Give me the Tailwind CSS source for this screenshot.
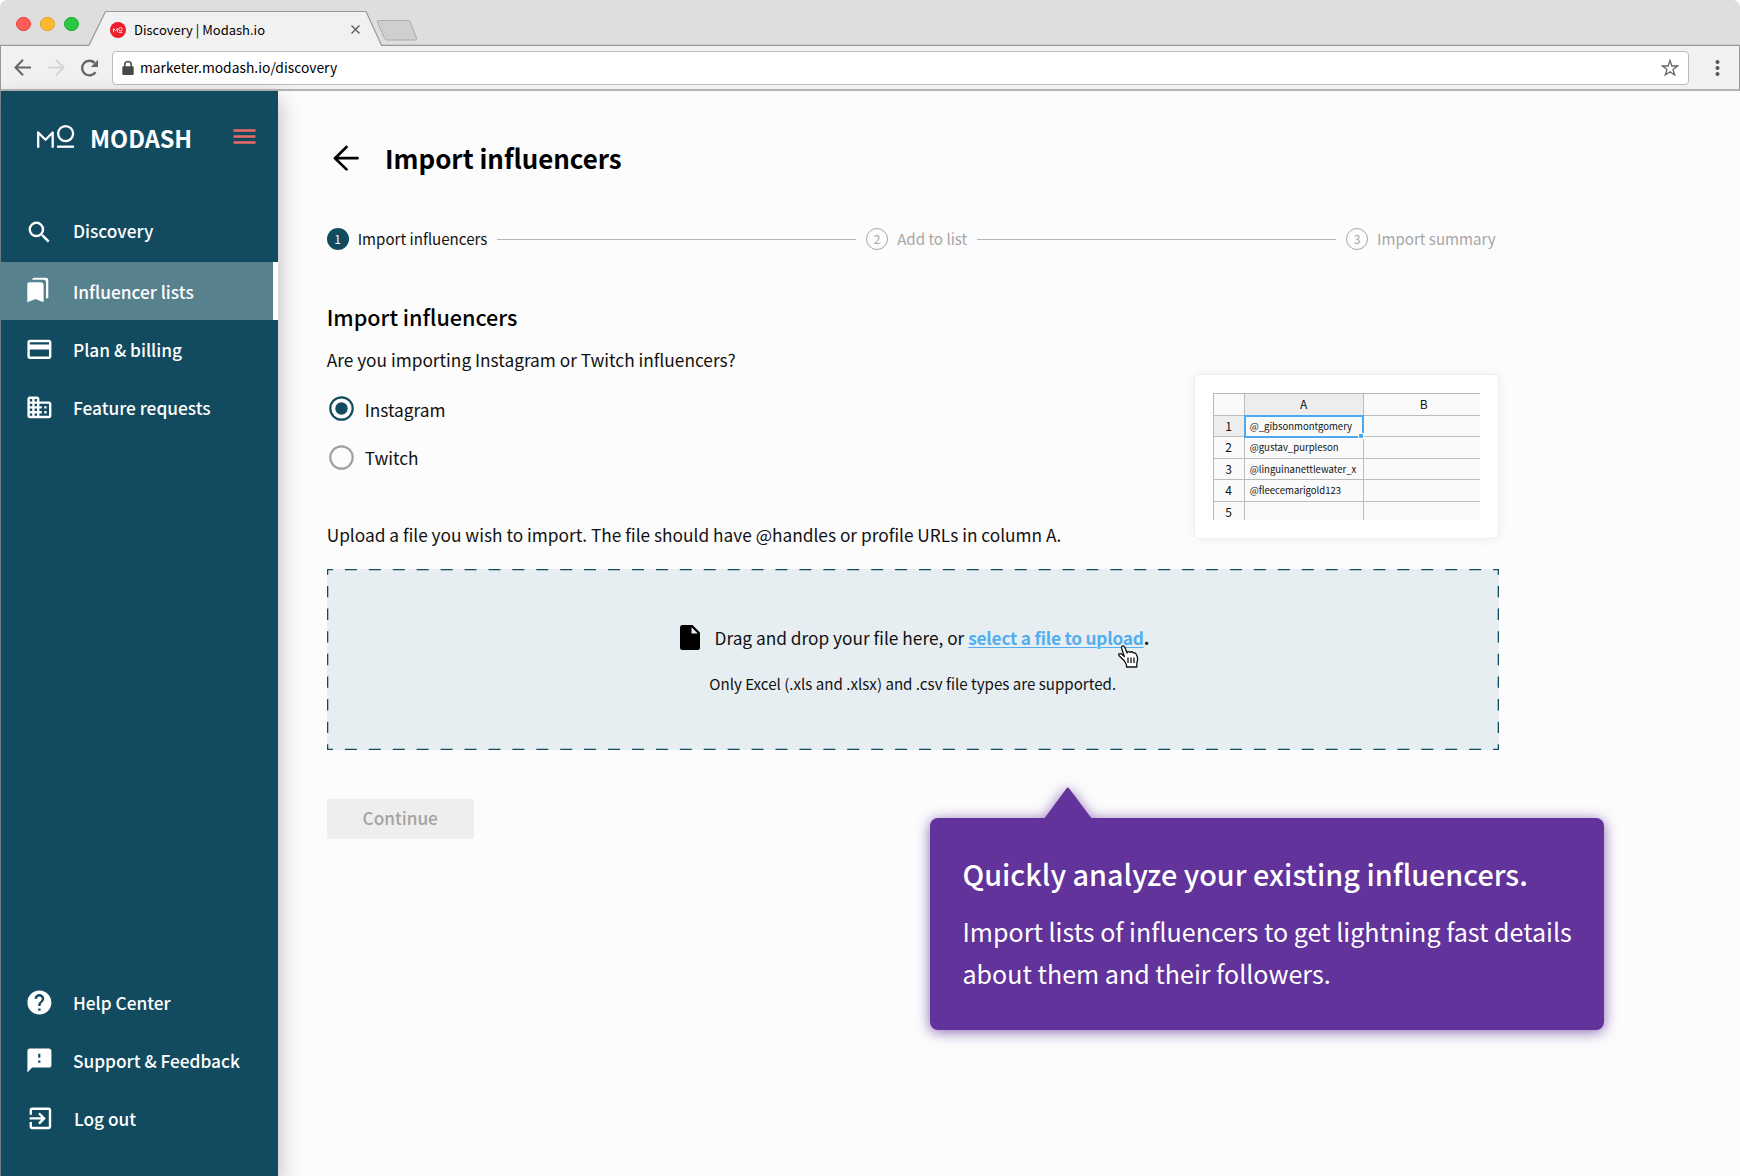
<!DOCTYPE html>
<html lang="en">
<head>
<meta charset="utf-8">
<title>Discovery | Modash.io</title>
<script src="https://cdn.jsdelivr.net/npm/@tailwindcss/browser@4"></script>
</head>
<body class="bg-white font-['Noto_Sans_CJK_SC','Noto_Sans',sans-serif] text-black">
<div class="relative flex h-[1176px] w-[1740px] flex-col overflow-hidden">

  <!-- Tab strip -->
  <div class="relative flex h-[46px] shrink-0 items-center rounded-t-[7px] bg-[#dedede] pl-4">
    <svg class="absolute inset-0" width="1740" height="46" viewBox="0 0 1740 46" fill="none">
      <path d="M0 45.3H89L105.5 11.5H366L381.5 45.3H1740V46H0Z" fill="#f1f1f1"/>
      <path d="M0 45.3H89L105.5 11.5H366L381.5 45.3H1740" stroke="#999" stroke-width="1.2" stroke-linejoin="round"/>
      <path d="M378.500 20.500H408Q409.500 20.500 410.200 22L416.500 38Q417 40 415 40H387Q385.300 40 384.500 38.500L377.500 22Q377 20.500 378.500 20.500Z" fill="#cfcfcf" stroke="#aaa"/>
    </svg>
    <div class="relative flex w-[86px] gap-[9.600px] pt-[2px]">
      <span class="size-[14.500px] rounded-full border border-[#e0443e] bg-[#ff5c57]"></span>
      <span class="size-[14.500px] rounded-full border border-[#dea123] bg-[#ffbb2e]"></span>
      <span class="size-[14.500px] rounded-full border border-[#1aab29] bg-[#28c940]"></span>
    </div>
    <div class="relative flex items-center pt-[13px] pl-[8px]">
      <svg width="16" height="16" viewBox="0 0 16 16" fill="none">
        <circle cx="8" cy="8" r="8" fill="#ed1c2b"/>
        <path d="M3.500 10.300V6.500L5.400 8.400L7.300 6.500V10.300M8.600 10.300H12.300" stroke="#fff" stroke-width=".9"/>
        <circle cx="10.450" cy="7.200" r="1.700" stroke="#fff" stroke-width=".8"/>
      </svg>
      <span class="ml-[8px] text-[13px] leading-5 whitespace-nowrap">Discovery | Modash.io</span>
    </div>
    <svg class="absolute top-[25px] left-[351px]" width="9" height="9" viewBox="0 0 9 9" stroke="#555" stroke-width="1.200"><path d="M.5 .5L8.500 8.500M8.500 .5L.5 8.500"/></svg>
  </div>

  <!-- Toolbar -->
  <div class="flex h-[45px] shrink-0 items-center border-x border-b-2 border-x-[#999] border-b-[#b5b5b5] bg-[#f1f1f1] pl-[13px]">
    <svg width="17" height="17" viewBox="0 0 17 17" fill="none" stroke="#666" stroke-width="2"><path d="M9 .8L1.500 8.500L9 16.200M1.500 8.500H17"/></svg>
    <svg class="ml-[17px]" width="17" height="17" viewBox="0 0 17 17" fill="none" stroke="#d6d6d6" stroke-width="2"><path d="M8 .8L15.500 8.500L8 16.200M15.500 8.500H0"/></svg>
    <svg class="ml-[15px]" width="19" height="18" viewBox="0 0 19 18" fill="none"><path d="M15.500 13.200A7.300 7.300 0 1 1 14.600 3.900" stroke="#666" stroke-width="2.400"/><path d="M18 .8V8H10.800Z" fill="#666"/></svg>
    <div class="ml-[13px] flex h-[34px] w-[1577px] items-center rounded-[4px] border border-[#bdbdbd] bg-white pl-[9px]">
      <svg width="12" height="14" viewBox="0 0 12 14"><path d="M2.800 6V3.800a3.200 3.200 0 0 1 6.400 0V6" fill="none" stroke="#484848" stroke-width="1.500"/><rect x=".3" y="5.300" width="11.400" height="8.700" rx="1.200" fill="#484848"/></svg>
      <span class="ml-[6px] flex-1 pb-px text-[13.850px] leading-6">marketer.modash.io/discovery</span>
      <svg class="mr-[9px]" width="18" height="18" viewBox="0 0 18 18" fill="none" stroke="#666" stroke-width="1.300"><path d="M9 1.500L10.900 7H16.600L12 10.500L13.700 16L9 12.700L4.300 16L6 10.500L1.400 7H7.100Z"/></svg>
    </div>
    <svg class="ml-[26px]" width="5" height="18" viewBox="0 0 5 18" fill="#555"><circle cx="2.500" cy="3" r="2"/><circle cx="2.500" cy="9" r="2"/><circle cx="2.500" cy="15" r="2"/></svg>
  </div>

  <div class="flex min-h-0 flex-1 border-l border-[#7b8b91] bg-[#fcfcfc]">
    <!-- Sidebar -->
    <nav class="relative z-10 flex w-[277px] shrink-0 flex-col bg-[#124b5f] pb-7 text-[17.300px] font-medium text-white shadow-[2px_8px_20px_rgba(0,0,0,0.25)]">
      <div class="flex h-[113px] items-start pt-[32px] pl-[35px]">
        <svg class="mt-[1px]" width="39" height="26" viewBox="0 0 39 26" fill="none" stroke="#fff" stroke-width="2.300">
          <path d="M2.200 23.700V8.500L9.500 15.800L16.700 8.500V23.700" stroke-linejoin="round"/>
          <circle cx="29.600" cy="9.600" r="7.500"/>
          <path d="M21 22.700H38"/>
        </svg>
        <span class="ml-[15px] pt-[2.500px] text-[23.500px] leading-6 font-bold">MODASH</span>
        <svg class="mt-[6px] mr-[22px] ml-auto" width="23" height="16" viewBox="0 0 23 16" stroke="#ef6a66" stroke-width="2.300"><path d="M.5 1.500H22.500M.5 7.500H22.500M.5 13.500H22.500"/></svg>
      </div>
      <a class="flex h-[58px] items-center pl-[23.500px]">
        <svg class="mb-px" width="28.800" height="28.800" viewBox="0 0 24 24" fill="currentColor"><path d="M15.500 14h-.79l-.28-.27A6.471 6.471 0 0 0 16 9.500 6.500 6.500 0 1 0 9.500 16c1.610 0 3.090-.59 4.230-1.570l.27.28v.79l5 4.990L20.490 19l-4.990-5zm-6 0C7.010 14 5 11.990 5 9.500S7.010 5 9.500 5 14 7.010 14 9.500 11.990 14 9.500 14z"/></svg>
        <span class="ml-[19.700px] pb-[4px]">Discovery</span>
      </a>
      <a class="-ml-px flex h-[58px] items-center border-r-[5px] border-white bg-[#58818e] pl-[24.500px]">
        <svg class="mb-px" width="28.800" height="28.800" viewBox="0 0 28.800 28.800" fill="currentColor"><path d="M4 6.200H15.500Q18.600 6.200 18.600 9.200V26.300L10.500 23L2.300 26.300V8Q2.300 6.200 4 6.200ZM7 3.700Q7.500 1.700 9.500 1.700H21Q23.300 1.700 23.300 4V22.300H21V6Q21 3.700 18.800 3.700Z"/></svg>
        <span class="ml-[19.700px] pt-[2px]">Influencer lists</span>
      </a>
      <a class="flex h-[58px] items-center pl-[23.500px]">
        <svg width="28.800" height="28.800" viewBox="0 0 24 24" fill="currentColor"><path d="M20 4H4c-1.110 0-1.990.89-1.990 2L2 18c0 1.110.89 2 2 2h16c1.110 0 2-.89 2-2V6c0-1.110-.89-2-2-2zm0 14H4v-6h16v6zm0-10H4V6h16v2z"/></svg>
        <span class="ml-[19.700px] pt-[2px]">Plan &amp; billing</span>
      </a>
      <a class="flex h-[58px] items-center pl-[23.500px]">
        <svg width="28.800" height="28.800" viewBox="0 0 24 24" fill="currentColor"><path d="M12 7V5c0-1.100-.9-2-2-2H4c-1.100 0-2 .9-2 2v14c0 1.100.9 2 2 2h16c1.100 0 2-.9 2-2V9c0-1.100-.9-2-2-2h-8zM6 19H4v-2h2v2zm0-4H4v-2h2v2zm0-4H4V9h2v2zm0-4H4V5h2v2zm4 12H8v-2h2v2zm0-4H8v-2h2v2zm0-4H8V9h2v2zm0-4H8V5h2v2zm10 12h-8v-2h2v-2h-2v-2h2v-2h-2V9h8v10zm-2-8h-2v2h2v-2zm0 4h-2v2h2v-2z"/></svg>
        <span class="ml-[19.700px] pt-[2px]">Feature requests</span>
      </a>
      <a class="mt-auto flex h-[58px] items-center pl-[23.500px]">
        <svg class="mb-px" width="28.800" height="28.800" viewBox="0 0 24 24" fill="currentColor"><path d="M12 2C6.480 2 2 6.480 2 12s4.480 10 10 10 10-4.480 10-10S17.520 2 12 2zm1 17h-2v-2h2v2zm2.070-7.750l-.9.920C13.450 12.900 13 13.500 13 15h-2v-.5c0-1.100.45-2.100 1.170-2.830l1.240-1.260c.37-.36.59-.86.59-1.410 0-1.100-.9-2-2-2s-2 .9-2 2H8c0-2.210 1.790-4 4-4s4 1.790 4 4c0 .88-.36 1.680-.93 2.250z"/></svg>
        <span class="ml-[19.700px]">Help Center</span>
      </a>
      <a class="flex h-[58px] items-center pl-[23.500px]">
        <svg class="mb-px" width="28.800" height="28.800" viewBox="0 0 24 24" fill="currentColor"><path d="M20 2H4c-1.100 0-1.990.9-1.990 2L2 22l4-4h14c1.100 0 2-.9 2-2V4c0-1.100-.9-2-2-2zm-7.200 12h-1.800v-2h1.800v2zm0-4.200h-1.800V6.500h1.800v3.300z"/></svg>
        <span class="ml-[19.700px]">Support &amp; Feedback</span>
      </a>
      <a class="flex h-[58px] items-center pl-[24.500px]">
        <svg class="mb-px" width="28.800" height="28.800" viewBox="0 0 24 24" fill="currentColor"><path d="M10.090 15.590L11.500 17l5-5-5-5-1.410 1.410L12.670 11H3v2h9.670l-2.580 2.590zM19 3H5c-1.110 0-2 .9-2 2v4h2V5h14v14H5v-4H3v4c0 1.100.89 2 2 2h14c1.100 0 2-.9 2-2V5c0-1.100-.9-2-2-2z"/></svg>
        <span class="ml-[19.700px]">Log out</span>
      </a>
    </nav>

    <!-- Page -->
    <main class="flex-1 pt-[47px] pl-[48.700px]">
      <div class="flex h-10 items-center">
        <svg class="ml-[6px]" width="26" height="26" viewBox="0 0 26 26" fill="none" stroke="#000" stroke-width="2.700" stroke-linecap="round" stroke-linejoin="round"><path d="M13.500 2L2 13.200L13.500 24.400M2 13.200H24.500"/></svg>
        <h1 class="ml-[26.300px] text-[25.900px] leading-10 font-bold">Import influencers</h1>
      </div>

      <!-- Stepper -->
      <div class="mt-[50px] flex h-[22px] w-[1169px] items-center text-[15.100px] leading-[22px] text-[#a6a6a6]">
        <span class="flex size-[22px] items-center justify-center rounded-full bg-[#124b5f] text-[12px] text-white">1</span>
        <span class="ml-[9px] pb-[2px] text-[#111]">Import influencers</span>
        <span class="mx-[10px] h-px flex-1 bg-[#b5b5b5]"></span>
        <span class="flex size-[22px] items-center justify-center rounded-full border border-[#a6a6a6] text-[12px]">2</span>
        <span class="ml-[9px] pb-[2px]">Add to list</span>
        <span class="mx-[10px] h-px flex-1 bg-[#b5b5b5]"></span>
        <span class="flex size-[22px] items-center justify-center rounded-full border border-[#a6a6a6] text-[12px]">3</span>
        <span class="ml-[9px] pb-[2px]">Import summary</span>
      </div>

      <div class="mt-[51px] flex w-[1172px] items-start justify-between">
        <div>
          <h2 class="text-[21.600px] leading-8 font-medium">Import influencers</h2>
          <p class="mt-[13px] text-[17.300px] leading-7 text-[#111]">Are you importing Instagram or Twitch influencers?</p>
          <div class="mt-[21.500px] flex flex-col gap-[23.500px] pl-[2px] text-[17.300px] leading-6 text-[#111]">
            <label class="flex items-center"><svg width="25" height="25" viewBox="0 0 25 25" fill="none" stroke="#124b5f" stroke-width="2.200"><circle cx="12.500" cy="12.500" r="11.200"/><circle cx="12.500" cy="12.500" r="6.200" fill="#124b5f" stroke="none"/></svg><span class="ml-[11px] pt-[2px]">Instagram</span></label>
            <label class="flex items-center"><svg width="25" height="25" viewBox="0 0 25 25" fill="none" stroke="#a0a0a0" stroke-width="2.200"><circle cx="12.500" cy="12.500" r="11.200"/></svg><span class="ml-[11px] pt-px">Twitch</span></label>
          </div>
          <p class="mt-[50.500px] text-[17.300px] leading-7 text-[#111]">Upload a file you wish to import. The file should have @handles or profile URLs in column A.</p>
        </div>

        <!-- Spreadsheet sample -->
        <div class="mt-[73px] h-[165px] w-[305px] rounded-[5px] border border-[#eee] bg-white pt-[18px] pl-[18px] shadow-[0_0_14px_rgba(0,0,0,0.05)]">
          <div class="relative grid h-[127px] w-[267px] grid-cols-[31px_119px_117px] grid-rows-[repeat(6,21.500px)] overflow-hidden border-t border-l border-[#b8b8b8] bg-[#fafafa] text-[9.550px] text-[#111] *:border-r *:border-b *:border-[#bcbcbc] *:leading-[20.500px]">
            <div></div><div class="bg-[#ededed] text-center text-[12px] leading-[19px]!">A</div><div class="border-r-0! pl-[3px] text-center text-[12px] leading-[19px]!">B</div>
            <div class="bg-[#ededed] text-center text-[12px] leading-[19.500px]!">1</div><div class="pl-[5px]">@_gibsonmontgomery</div><div class="border-r-0!"></div>
            <div class="text-center text-[12px] leading-[19.500px]!">2</div><div class="pl-[5px]">@gustav_purpleson</div><div class="border-r-0!"></div>
            <div class="text-center text-[12px] leading-[19.500px]!">3</div><div class="pl-[5px]">@linguinanettlewater_x</div><div class="border-r-0!"></div>
            <div class="text-center text-[12px] leading-[19.500px]!">4</div><div class="pl-[5px]">@fleecemarigold123</div><div class="border-r-0!"></div>
            <div class="text-center text-[12px] leading-[19.500px]!">5</div><div></div><div class="border-r-0!"></div>
            <span class="absolute top-[20.500px] left-[30px] h-[23px] w-[120px] border-2! border-[#4aa9f0]!"></span>
            <span class="absolute top-[38.500px] left-[144.500px] size-[6px] border! border-white! bg-[#4aa9f0]"></span>
          </div>
        </div>
      </div>

      <!-- Drop zone -->
      <div class="relative mt-5 flex h-[181.500px] w-[1172px] flex-col items-center bg-[#e7eef2] text-[#111]">
        <svg class="absolute inset-0" width="1172" height="181" viewBox="0 0 1172 181" fill="none" stroke="#124b5f" stroke-width="1.300">
          <path d="M0 .65H1172M0 180.350H1172" stroke-dasharray="11.960 11.960" stroke-dashoffset="5.980"/>
          <path d="M.65 0V181M1171.350 0V181" stroke-dasharray="11.312 11.312" stroke-dashoffset="5.656"/>
        </svg>
        <div class="mt-[55px] flex h-7 items-center pl-1 text-[17.300px] leading-7 whitespace-nowrap">
          <svg class="mr-[14.500px]" width="20" height="25" viewBox="0 0 20 25"><path d="M2.500 0H12.500L20 7.500V22.500Q20 25 17.500 25H2.500Q0 25 0 22.500V2.500Q0 0 2.500 0Z" fill="#000"/><path d="M11.500 2.300V8.600H17.800Z" fill="#e7eef2"/></svg>
          <span>Drag and drop your file here, or <a class="font-bold tracking-[-0.22px] text-[#54aeee] underline decoration-1 underline-offset-[2px]">select a file to upload</a><b>.</b></span>
        </div>
        <p class="mt-[19.500px] text-[15.120px] leading-6">Only Excel (.xls and .xlsx) and .csv file types are supported.</p>
        <svg class="absolute top-[76px] left-[789px]" width="24" height="24" viewBox="0 0 24 24" fill="#fff" stroke="#111" stroke-width="1.300" stroke-linejoin="round"><path d="M8.500 16L4.200 11.800Q2 9.800 3.200 8.800Q4.500 8 6.500 9.800L8.300 11.500L5.700 3.500Q5.200 1.200 6.800 .9Q8.200 .7 9 2.800L11 8Q11.500 5.800 14.200 7.300Q15.500 6 17.500 8Q19.600 7.300 20.500 9.800Q22.500 13.500 20.800 18V22H10.500V20Z"/><path d="M12 12.500V18M15 12.500V18M18 12.500V18"/></svg>
      </div>

      <button class="mt-[48.500px] h-10 w-[147px] rounded-[2px] bg-[#eee] pb-px text-[17.200px] font-medium text-[#a3a3a3]">Continue</button>
    </main>
  </div>

  <!-- Callout -->
  <div class="absolute top-[818px] left-[930px] z-20 h-[212px] w-[674px] rounded-[8px] bg-[#61339b] pt-[33px] pl-[32.500px] text-white drop-shadow-[0_2px_7px_rgba(97,51,155,0.75)]">
    <svg class="absolute -top-[31px] left-[114px]" width="48" height="32" viewBox="0 0 48 32" fill="#61339b"><path d="M0 32L22.800 1Q23.800 0 24.800 1L48 32Z"/></svg>
    <h3 class="text-[28.800px] leading-[46px] font-medium whitespace-nowrap">Quickly analyze your existing influencers.</h3>
    <p class="mt-[13px] text-[25.060px] leading-[42px] whitespace-nowrap">Import lists of influencers to get lightning fast details<br>about them and their followers.</p>
  </div>
</div>
</body>
</html>
